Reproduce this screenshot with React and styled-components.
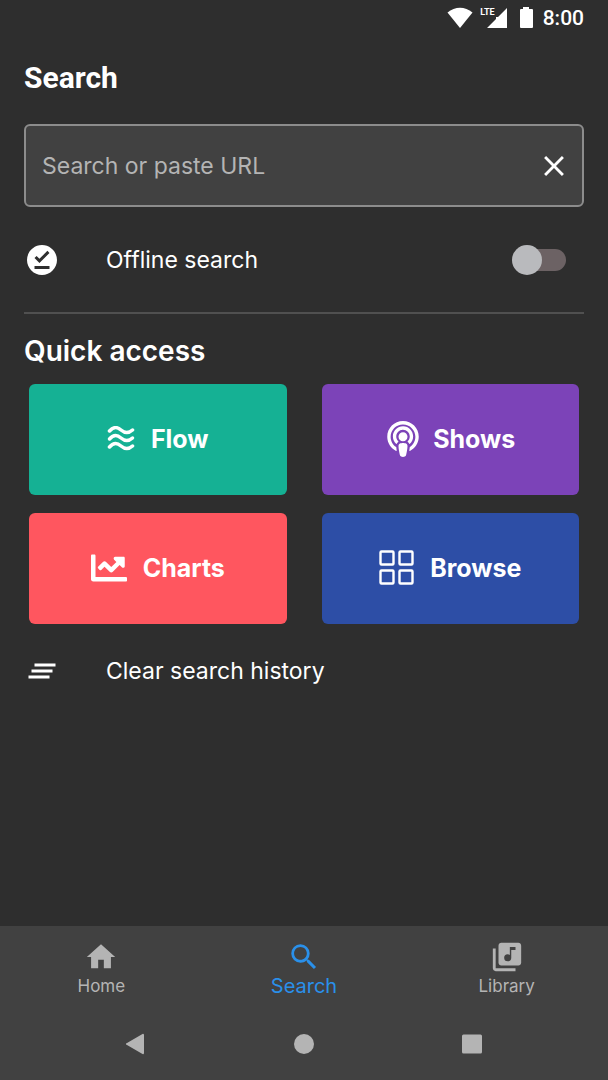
import React, { useState } from 'react';
import styled, { createGlobalStyle, ThemeProvider } from 'styled-components';
import { MdOfflinePin, MdClearAll, MdHome, MdSearch, MdLibraryMusic, MdClose } from 'react-icons/md';
import { FaChartLine, FaPodcast } from 'react-icons/fa';

const theme = {
  background: '#2e2e2e',
  surface: '#414141',
  border: '#8c8c8c',
  divider: '#505050',
  white: '#ffffff',
  muted: '#b4b4b4',
  accent: '#2a90ea',
};

const GlobalStyle = createGlobalStyle`
  * {
    box-sizing: border-box;
  }
  body {
    margin: 0;
    background-color: ${({ theme }) => theme.background};
    color: ${({ theme }) => theme.white};
    font-family: Inter, "Liberation Sans", sans-serif;
  }
  h1, h2 {
    margin: 0;
  }
  svg {
    display: block;
    flex-shrink: 0;
  }
`

const BaseButton = styled.button`
  padding: 0;
  border: 0;
  background: none;
  color: inherit;
  font-family: inherit;
  cursor: pointer;
`

const Screen = styled.div`
  display: flex;
  flex-direction: column;
  min-height: 100vh;
`

const StatusBar = styled.header`
  display: flex;
  align-items: center;
  justify-content: flex-end;
  height: 36px;
  padding: 0 24px;
  time {
    margin-left: 8px;
    font-family: Roboto, sans-serif;
    font-size: 21px;
    font-weight: 500;
  }
`

const Main = styled.main`
  flex: 1;
  padding: 24px 24px 0;
`

const Title = styled.h1`
  font-family: Roboto, sans-serif;
  font-size: 30px;
  font-weight: 700;
  line-height: 36px;
`

const SearchBox = styled.form`
  display: flex;
  align-items: center;
  height: 83px;
  margin-top: 28px;
  padding: 0 11px 0 16px;
  border: 2px solid ${({ theme }) => theme.border};
  border-radius: 6px;
  background-color: ${({ theme }) => theme.surface};
  input {
    flex: 1;
    min-width: 0;
    padding: 0;
    border: 0;
    outline: 0;
    background: none;
    color: ${({ theme }) => theme.white};
    font-family: inherit;
    font-size: 23px;
    &::placeholder {
      color: ${({ theme }) => theme.muted};
      opacity: 1;
    }
  }
`

const rowStyle = `
  display: flex;
  align-items: center;
  width: 100%;
  font-size: 23px;
  line-height: 28px;
  text-align: left;
`

const OfflineRow = styled.label`
  ${rowStyle}
  height: 107px;
  border-bottom: 2px solid ${({ theme }) => theme.divider};
  padding-right: 18px;
`

const ClearRow = styled(BaseButton)`
  ${rowStyle}
  height: 94px;
`

const RowIcon = styled.span`
  width: 82px;
`

const Switch = styled.input`
  appearance: none;
  display: flex;
  align-items: center;
  width: 54px;
  height: 22px;
  margin: 0 0 0 auto;
  border-radius: 11px;
  background: linear-gradient(#6c6264, #6c6264) right / 44px 22px no-repeat;
  cursor: pointer;
  &::before {
    content: '';
    flex-shrink: 0;
    width: 30px;
    height: 30px;
    border-radius: 50%;
    background-color: #b9babd;
  }
  &:checked {
    justify-content: flex-end;
    background-position: left;
  }
`

const SectionTitle = styled.h2`
  padding-top: 19px;
  font-size: 28px;
  font-weight: 600;
  line-height: 36px;
`

const TileGrid = styled.div`
  display: grid;
  grid-template-columns: 1fr 1fr;
  gap: 18px 35px;
  padding: 15px 5px 0;
`

const Tile = styled(BaseButton)`
  display: flex;
  align-items: center;
  justify-content: center;
  gap: ${({ $gap }) => $gap}px;
  height: 111px;
  padding-bottom: 2px;
  border-radius: 6px;
  background-color: ${({ $color }) => $color};
  font-size: 25px;
  font-weight: 700;
  line-height: 30px;
`

const BottomNav = styled.nav`
  display: grid;
  grid-template-columns: repeat(3, 1fr);
  height: 82px;
  padding-top: 14px;
  background-color: ${({ theme }) => theme.surface};
`

const NavItem = styled(BaseButton)`
  display: flex;
  flex-direction: column;
  align-items: center;
  color: ${({ theme, $active }) => ($active ? theme.accent : theme.muted)};
  font-size: ${({ $active }) => ($active ? 20 : 17)}px;
  line-height: 24px;
`

const SystemBar = styled.div`
  display: grid;
  grid-template-columns: repeat(3, 1fr);
  justify-items: center;
  height: 72px;
  padding: 0 52px;
  background-color: ${({ theme }) => theme.surface};
  color: ${({ theme }) => theme.muted};
`

const NetworkType = styled.span`
  align-self: flex-start;
  margin: 7px -8px 0 7px;
  font-family: Roboto, sans-serif;
  font-size: 9px;
  font-weight: 700;
  line-height: 11px;
`

const StatusIcons = () => (
  <>
    <svg width="26" height="22" viewBox="0 0 26 22" fill="currentColor" aria-hidden="true">
      <path d="M0.500 5.500C8-0.800 18-0.800 25.500 5.500L13 21z" />
    </svg>
    <NetworkType>LTE</NetworkType>
    <svg width="20" height="20" viewBox="0 0 20 20" fill="currentColor" aria-hidden="true">
      <path d="M20 0v20H0L9 11V9h2z" />
    </svg>
    <svg width="28" height="22" viewBox="0 0 28 22" fill="currentColor" aria-hidden="true">
      <path d="M16 0h6v2h3a1 1 0 0 1 1 1v17a1 1 0 0 1-1 1H14a1 1 0 0 1-1-1V3a1 1 0 0 1 1-1h2z" />
    </svg>
  </>
)

const FlowIcon = () => (
  <svg width="28" height="26" viewBox="0 0 28 26" fill="none" stroke="currentColor" strokeWidth="3.500" strokeLinecap="round">
    {[0, 8, 16].map(y => (
      <path key={y} d={`M2.500 ${y + 5}C7 ${y} 10.500 ${y + 1} 14 ${y + 4}S21 ${y + 8} 25.500 ${y + 4}`} />
    ))}
  </svg>
)

const BrowseIcon = () => (
  <svg width="35" height="35" viewBox="0 0 35 35" fill="none" stroke="currentColor" strokeWidth="2.400">
    {[[1.5, 1.5], [20.5, 1.5], [1.5, 20.5], [20.5, 20.5]].map(([x, y]) => (
      <rect key={`${x}-${y}`} x={x} y={y} width="13" height="13" rx="1" />
    ))}
  </svg>
)

const tiles = [
  { label: 'Flow', color: '#15b194', gap: 16, icon: <FlowIcon /> },
  { label: 'Shows', color: '#7c43b8', gap: 12, icon: <FaPodcast size={36} /> },
  { label: 'Charts', color: '#ff565f', gap: 16, icon: <FaChartLine size={36} /> },
  { label: 'Browse', color: '#2d4ea6', gap: 16, icon: <BrowseIcon /> },
]

const tabs = [
  { label: 'Home', Icon: MdHome },
  { label: 'Search', Icon: MdSearch },
  { label: 'Library', Icon: MdLibraryMusic },
]

const SystemButton = ({ label, children }) => (
  <BaseButton aria-label={label}>
    <svg width="24" height="24" viewBox="0 0 24 24" fill="currentColor">{children}</svg>
  </BaseButton>
)

const App = () => {
  const [query, setQuery] = useState('');
  const [offline, setOffline] = useState(false);
  const [tab, setTab] = useState('Search');

  return (
    <ThemeProvider theme={theme}>
      <GlobalStyle />
      <Screen>
        <StatusBar>
          <StatusIcons />
          <time>8:00</time>
        </StatusBar>
        <Main>
          <Title>Search</Title>
          <SearchBox onSubmit={e => e.preventDefault()}>
            <input
              type="text"
              aria-label="Search or paste URL"
              placeholder="Search or paste URL"
              value={query}
              onChange={e => setQuery(e.target.value)}
            />
            <BaseButton type="button" aria-label="Clear" onClick={() => setQuery('')}>
              <MdClose size={34} />
            </BaseButton>
          </SearchBox>
          <OfflineRow>
            <RowIcon><MdOfflinePin size={36} /></RowIcon>
            Offline search
            <Switch type="checkbox" role="switch" checked={offline} onChange={e => setOffline(e.target.checked)} />
          </OfflineRow>
          <SectionTitle>Quick access</SectionTitle>
          <TileGrid>
            {tiles.map(({ label, color, gap, icon }) => (
              <Tile key={label} $color={color} $gap={gap}>
                {icon}
                {label}
              </Tile>
            ))}
          </TileGrid>
          <ClearRow>
            <RowIcon><MdClearAll size={36} /></RowIcon>
            Clear search history
          </ClearRow>
        </Main>
        <BottomNav>
          {tabs.map(({ label, Icon }) => (
            <NavItem key={label} $active={tab === label} onClick={() => setTab(label)}>
              <Icon size={34} />
              {label}
            </NavItem>
          ))}
        </BottomNav>
        <SystemBar>
          <SystemButton label="Back"><path d="M20 3v18a1 1 0 0 1-1.500 1L3 13a1 1 0 0 1 0-2L18.500 2A1 1 0 0 1 20 3z" /></SystemButton>
          <SystemButton label="Home screen"><circle cx="12" cy="12" r="10" /></SystemButton>
          <SystemButton label="Recent apps"><rect x="2" y="2.500" width="20" height="19" rx="1.500" /></SystemButton>
        </SystemBar>
      </Screen>
    </ThemeProvider>
  );
}

export default App;
